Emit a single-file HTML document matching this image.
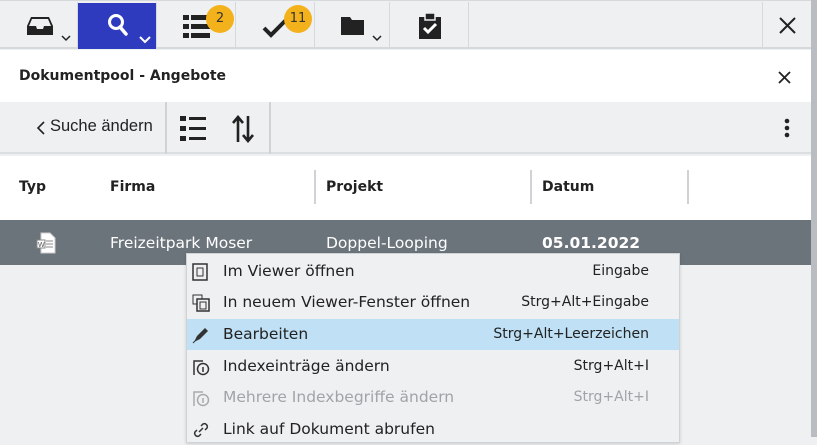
<!DOCTYPE html>
<html><head><style>
*{margin:0;padding:0;box-sizing:border-box}
body{width:817px;height:437px;overflow:hidden;background:#eef0f1;font-family:"DejaVu Sans","Liberation Sans",sans-serif;position:relative;color:#222}
.abs{position:absolute}
.top{left:0;top:0;width:811px;height:49px;background:#eef0f1;border-bottom:2px solid #d6d9dc;border-top:1px solid #d6d9dc}
.btn{position:absolute;top:1px;height:46px;border-right:1px solid #d6d9dc}
.badge{position:absolute;width:28px;height:28px;border-radius:50%;background:#f3b21b;color:#333;font-size:13px;text-align:center;line-height:28px}
.scroll{right:0;top:0;width:6px;height:437px;background:#b9bdc1}
.hdr{font-weight:bold;font-size:14px}
.sep{position:absolute;width:2px;background:#d0d3d6}
.menu{left:186px;top:253px;width:494px;height:190px;background:#eef0f1;border:1px solid #d0d3d6;box-shadow:0 1px 3px rgba(0,0,0,.15)}
.it{position:absolute;left:0;width:492px;height:31px;font-size:15.5px;line-height:31px}
.it .t{position:absolute;left:36px}
.it .k{position:absolute;right:30px;font-size:14px}
.it svg{position:absolute;left:5px;top:7px}
</style></head><body>
<div class="abs top">
 <div class="btn" style="left:0;width:78px">
  <svg class="abs" style="left:26px;top:14px" width="28" height="20" viewBox="0 0 28 20"><path d="M5 1h18l4 9v9H1v-9z" fill="#222"/><path d="M6 3h16l3 7h-7l-1 3h-6l-1-3H3z" fill="#eef0f1"/></svg>
  <svg class="abs" style="left:61px;top:33px" width="10" height="7"><path d="M1 1l4 4 4-4" stroke="#222" fill="none" stroke-width="1.5"/></svg>
 </div>
 <div class="btn" style="left:78px;width:79px;background:#2f3bbf;top:2px;height:46px">
  <svg class="abs" style="left:29px;top:10px" width="24" height="26"><circle cx="9" cy="9" r="6.5" stroke="#fff" stroke-width="3" fill="none"/><path d="M13 14l6 7" stroke="#fff" stroke-width="3.5" stroke-linecap="round"/></svg>
  <svg class="abs" style="left:61px;top:33px" width="12" height="8"><path d="M1 1l5 5 5-5" stroke="#fff" fill="none" stroke-width="2"/></svg>
 </div>
 <div class="btn" style="left:157px;width:79px">
  <svg class="abs" style="left:26px;top:13px" width="28" height="25"><g fill="#222"><rect x="0" y="0" width="6" height="5"/><rect x="8" y="0" width="19" height="5"/><rect x="0" y="9" width="6" height="5"/><rect x="8" y="9" width="19" height="5"/><rect x="0" y="18" width="6" height="5"/><rect x="8" y="18" width="19" height="5"/></g></svg>
  <div class="badge" style="left:49px;top:3px">2</div>
 </div>
 <div class="btn" style="left:236px;width:79px">
  <svg class="abs" style="left:26px;top:16px" width="26" height="20"><path d="M2 10l7 7L24 2" stroke="#222" stroke-width="4" fill="none"/></svg>
  <div class="badge" style="left:48px;top:3px">11</div>
 </div>
 <div class="btn" style="left:315px;width:75px">
  <svg class="abs" style="left:26px;top:15px" width="24" height="18"><path d="M0 0h9l2 3h12v15H0z" fill="#222"/></svg>
  <svg class="abs" style="left:57px;top:33px" width="10" height="7"><path d="M1 1l4 4 4-4" stroke="#222" fill="none" stroke-width="1.5"/></svg>
 </div>
 <div class="btn" style="left:390px;width:79px">
  <svg class="abs" style="left:29px;top:11px" width="22" height="26"><path d="M0 4h22v22H0z" fill="#222"/><rect x="6" y="0" width="10" height="7" fill="#222" stroke="#eef0f1" stroke-width="1.5"/><path d="M5 15l4 4 8-8" stroke="#fff" stroke-width="3" fill="none"/></svg>
 </div>
 <div class="btn" style="left:762px;width:49px;border-left:1px solid #d6d9dc;border-right:none">
  <svg class="abs" style="left:16px;top:15px" width="17" height="17"><path d="M1 1l15 15M16 1L1 16" stroke="#222" stroke-width="2"/></svg>
 </div>
</div>
<div class="abs" style="left:0;top:50px;width:811px;height:52px;background:#fff">
 <div class="abs hdr" style="left:19px;top:18px;font-size:14px">Dokumentpool - Angebote</div>
 <svg class="abs" style="left:778px;top:21px" width="13" height="13"><path d="M1 1l11 11M12 1L1 12" stroke="#222" stroke-width="1.8"/></svg>
</div>
<div class="abs" style="left:0;top:102px;width:811px;height:52px;background:#eef0f1;border-bottom:2px solid #dcdfe2">
 <svg class="abs" style="left:37px;top:19px" width="8" height="14"><path d="M7 1L1 7l6 6" stroke="#222" stroke-width="1.6" fill="none"/></svg>
 <div class="abs" style="left:50px;top:15px;font-size:16.5px;font-family:'Liberation Sans',sans-serif;color:#222">Suche ändern</div>
 <div class="sep" style="left:165px;top:0;height:52px"></div>
 <div class="sep" style="left:269px;top:0;height:52px"></div>
 <svg class="abs" style="left:180px;top:14px" width="28" height="26"><g fill="#222"><rect x="0" y="0" width="6" height="5"/><rect x="9" y="1" width="17" height="3"/><rect x="0" y="10" width="6" height="5"/><rect x="9" y="11" width="17" height="3"/><rect x="0" y="20" width="6" height="5"/><rect x="9" y="21" width="17" height="3"/></g></svg>
 <svg class="abs" style="left:232px;top:13px" width="22" height="28"><path d="M6 27V3M1 8l5-6 5 6M16 1v24M11 20l5 6 5-6" stroke="#222" stroke-width="2.6" fill="none"/></svg>
 <svg class="abs" style="left:784px;top:16px" width="6" height="20"><circle cx="3" cy="3" r="2.3" fill="#222"/><circle cx="3" cy="10" r="2.3" fill="#222"/><circle cx="3" cy="17" r="2.3" fill="#222"/></svg>
</div>
<div class="abs" style="left:0;top:156px;width:811px;height:64px;background:#fff">
 <div class="abs hdr" style="left:19px;top:23px">Typ</div>
 <div class="abs hdr" style="left:110px;top:23px">Firma</div>
 <div class="abs hdr" style="left:326px;top:23px">Projekt</div>
 <div class="abs hdr" style="left:542px;top:23px">Datum</div>
 <div class="sep" style="left:314px;top:14px;height:34px"></div>
 <div class="sep" style="left:530px;top:14px;height:34px"></div>
 <div class="sep" style="left:687px;top:14px;height:34px"></div>
</div>
<div class="abs" style="left:0;top:220px;width:811px;height:45px;background:#6b737b;color:#fff;font-size:15.5px">
 <svg class="abs" style="left:35px;top:12px" width="22" height="22"><path d="M6 1h9l5 5v15H6z" fill="#fff" stroke="#ccc"/><path d="M11 9h7M11 12h7M11 15h7" stroke="#888"/><rect x="2" y="8" width="8" height="8" fill="#fff" stroke="#888"/><text x="3" y="15" font-size="7" fill="#555" font-family="Liberation Sans">W</text></svg>
 <div class="abs" style="left:110px;top:14px">Freizeitpark Moser</div>
 <div class="abs" style="left:326px;top:14px">Doppel-Looping</div>
 <div class="abs" style="left:542px;top:14px;font-weight:bold">05.01.2022</div>
</div>
<div class="abs menu">
 <div class="it" style="top:2px"><svg width="16" height="18"><rect x="1" y="1" width="14" height="16" fill="none" stroke="#333" stroke-width="1.5"/><rect x="5" y="5" width="6" height="8" fill="none" stroke="#333"/></svg><span class="t">Im Viewer öffnen</span><span class="k">Eingabe</span></div>
 <div class="it" style="top:33px"><svg width="18" height="18"><rect x="1" y="1" width="9" height="9" fill="none" stroke="#333"/><rect x="5" y="5" width="12" height="12" fill="#eef0f1" stroke="#333" stroke-width="1.5"/><rect x="8" y="8" width="6" height="7" fill="none" stroke="#333"/></svg><span class="t">In neuem Viewer-Fenster öffnen</span><span class="k">Strg+Alt+Eingabe</span></div>
 <div class="it" style="top:65px;background:#bfe0f5"><svg width="18" height="18"><path d="M2 16l3-6 8-8 3 3-8 8z" fill="#333"/><path d="M1 17l2-2" stroke="#333"/></svg><span class="t">Bearbeiten</span><span class="k">Strg+Alt+Leerzeichen</span></div>
 <div class="it" style="top:97px"><svg width="18" height="18"><path d="M2 17V3h9" fill="none" stroke="#333" stroke-width="1.5"/><circle cx="11" cy="11" r="5.5" fill="none" stroke="#333" stroke-width="1.5"/><path d="M11 9v5" stroke="#333" stroke-width="1.5"/></svg><span class="t">Indexeinträge ändern</span><span class="k">Strg+Alt+I</span></div>
 <div class="it" style="top:128px;color:#a0a4a8"><svg width="18" height="18"><path d="M2 17V3h9" fill="none" stroke="#aaa" stroke-width="1.5"/><circle cx="11" cy="11" r="5.5" fill="none" stroke="#aaa" stroke-width="1.5"/><path d="M11 9v5" stroke="#aaa" stroke-width="1.5"/></svg><span class="t">Mehrere Indexbegriffe ändern</span><span class="k">Strg+Alt+I</span></div>
 <div class="it" style="top:160px"><svg width="18" height="18"><path d="M7 11l4-4M5 9l-2 2a3 3 0 004 4l2-2M13 9l2-2a3 3 0 00-4-4l-2 2" stroke="#333" stroke-width="1.5" fill="none"/></svg><span class="t">Link auf Dokument abrufen</span></div>
</div>
<div class="abs scroll"></div>
</body></html>
